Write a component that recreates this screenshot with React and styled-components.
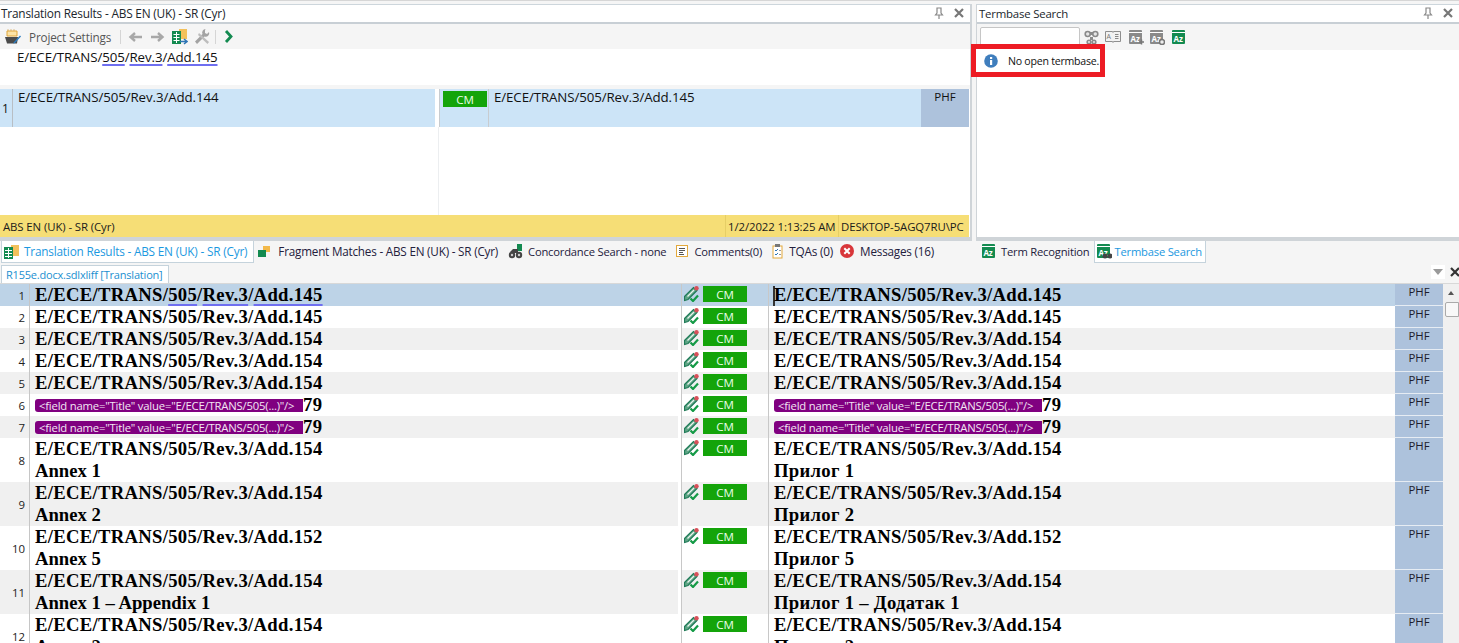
import React from "react";
import styled, { createGlobalStyle } from "styled-components";

const Global = createGlobalStyle`
  html, body { margin: 0; padding: 0; background: #f5f5f5; overflow: hidden; }
  #root { width: 1459px; height: 643px; overflow: hidden; }
  * { box-sizing: border-box; }
`;
const UI = `"Open Sans", "Liberation Sans", Arial, sans-serif`;

const Page = styled.div`
  width: 1459px; height: 643px; display: flex; flex-direction: column; overflow: hidden;
  font-family: ${UI}; font-size: 12px; color: #1b1b1b; background: #f5f5f5;
  border-top: 1px solid #d6d6d6;
`;
const TopArea = styled.div`
  height: 240px; flex: none; display: flex; padding-top: 3px; gap: 4px;
`;
const Panel = styled.section`
  width: ${p => p.$w}px; flex: none; position: relative; display: flex; flex-direction: column;
  background: #fff; border-right: ${p => p.$edge ? "2px solid #cfd4d8" : "0"};
  border-left: ${p => p.$left ? "1px solid #cfd4d8" : "0"};
  border-top: 1px solid #cdd6dc; border-bottom: 4px solid #cfd4d8;
`;
const TitleBar = styled.header`
  height: 19px; flex: none; display: flex; align-items: center; justify-content: space-between;
  padding: 0 6px 1px ${p => p.$pl || 1}px; background: #fff; border-bottom: 2px solid #c8cfd5;
  font-size: ${p => p.$fs || 11.4}px; color: #20262c; letter-spacing: -.2px;
`;
const TitleBtns = styled.div` display: flex; gap: 10px; align-items: center; color: #8a8a8a; `;
const Toolbar = styled.div`
  height: 25px; flex: none; display: flex; align-items: center; background: #f5f5f5; padding-left: 5px;
`;
const ToolLabel = styled.span` margin: 0 9px 0 8px; color: #555; font-size: 11.7px; letter-spacing: -.15px; `;
const ToolSep = styled.i` width: 1px; height: 14px; background: #d5d5d5; margin-right: ${p => p.$mr || 6}px; `;
const ToolIcon = styled.span` display: inline-flex; margin-right: ${p => p.$mr || 5}px; `;

const SourceLine = styled.div`
  height: 36px; flex: none; padding: 0 0 0 17px; line-height: 17px; font-size: 13.3px; letter-spacing: -.1px; background: #fff; color: #111;
`;
const Wavy = styled.span`
  text-decoration: underline; text-decoration-color: #6f6ff0; text-decoration-thickness: 2px;
  text-underline-offset: ${p => p.$off || 3}px; text-decoration-skip-ink: none;
`;
const Spacer = styled.div` height: 4px; flex: none; background: #f5f5f5; `;
const ResultRow = styled.div`
  height: 38px; flex: none; display: grid; grid-template-columns: 13px 422px 4px 50px 432px 48px;
  background: #fff; font-size: 13.3px; letter-spacing: -.1px; color: #111;
`;
const RNum = styled.div` background: #cce4f7; border-right: 1px solid #b8bec4; display: flex; align-items: center; padding-left: 2px; font-size: 12px; `;
const RText = styled.div` background: #cce4f7; padding: 0 5px; line-height: 17px; `;
const RStatus = styled.div` background: #cce4f7; border-left: 1px solid #c8ccd0; border-right: 1px solid #c8ccd0; padding: 2px 2px; `;
const RGap = styled.div` background: #fff; `;
const RPhf = styled.div` background: #adc2dc; text-align: center; line-height: 16px; font-size: 11.5px; letter-spacing: 0; `;
const ResultBody = styled.div` flex: 1; display: flex; background: #fff; `;
const VLine = styled.i` width: 1px; margin-left: 438px; background: #eceef0; `;
const StatusBar = styled.footer`
  height: 22px; flex: none; display: flex; align-items: center; background: #f6de76; font-size: 11.4px; letter-spacing: -.1px; white-space: nowrap; margin-right: 1px;
`;
const StatusName = styled.span` flex: 1; padding-left: 3px; `;
const StatusCell = styled.span`
  width: ${p => p.$w}px; padding-left: 2px; height: 100%; display: flex; align-items: center; border-left: 1px solid #e6ce66;
`;
const TermBody = styled.div` flex: 1; background: #fff; `;
const SearchBox = styled.div`
  width: 100px; height: 22px; margin: 1px 4px 0 0; background: #fff; border: 1px solid #c6c6c6; border-radius: 2px;
`;
const TermBar = styled(Toolbar)` padding-left: 3px; height: 26px; `;
const Notice = styled.div`
  position: absolute; left: -6px; top: 39px; width: 134px; height: 33px; border: 5px solid #ed1c24; background: #fff;
  display: flex; align-items: center; padding-left: 8px; gap: 10px; font-size: 10.6px; letter-spacing: -.25px; color: #111; white-space: nowrap;
`;

const TabRow = styled.nav` height: 22px; flex: none; display: flex; `;
const TabGroup = styled.div` width: ${p => p.$w}px; flex: none; display: flex; padding-left: ${p => p.$pl || 0}px; `;
const Tab = styled.div`
  height: 22px; display: flex; align-items: center; gap: ${p => p.$gap || 5}px; padding: 0 ${p => p.$pr || 6}px 1px ${p => p.$pil || 2}px;
  font-size: ${p => p.$fs || 11.2}px; letter-spacing: -.2px; white-space: nowrap;
  color: ${p => p.$active ? "#1b98e0" : "#23203c"};
  background: ${p => p.$active ? "#fff" : "transparent"};
  border: 1px solid ${p => p.$active ? "#c5d3dc" : "transparent"};
  border-top: 0;
`;
const DocRow = styled.div`
  height: 21px; flex: none; display: flex; align-items: flex-end; justify-content: space-between; padding-left: 1px; border-bottom: 1px solid #d8d8d8;
`;
const DocTab = styled.div`
  width: 168px; height: 18px; background: #fff; border: 1px solid #c5d3dc; border-bottom: 0; color: #1b8fd0;
  font-size: 11px; letter-spacing: -.2px; line-height: 17px; padding-left: 4px; white-space: nowrap; overflow: hidden;
`;
const DocTools = styled.div` display: flex; align-items: center; height: 18px; margin-bottom: 2px; `;
const DocArrow = styled.span`
  width: 14px; height: 14px; background: #fff; display: flex; align-items: center; justify-content: center; margin-right: 5px;
  &::after { content: ""; border: 5px solid transparent; border-top: 6px solid #9a9a9a; border-bottom: 0; }
`;
const DocX = styled.span` width: 9px; overflow: hidden; color: #333; display: inline-flex; `;

const GridWrap = styled.div` flex: 1; min-height: 0; display: flex; overflow: hidden; background: #fff; `;
const Grid = styled.div` width: 1443px; flex: none; display: flex; flex-direction: column; `;
const Row = styled.div`
  height: ${p => p.$lines * 22}px; flex: none; display: grid; grid-template-columns: 30px 648px 4px 87px 626px 48px;
  background: ${p => p.$sel ? "#bdd3e7" : p.$alt ? "#f0f0f0" : "#fff"};
  font-family: "Liberation Serif", "Times New Roman", serif; font-weight: 700; font-size: 18.67px; color: #000;
`;
const Num = styled.div`
  border-right: 1px solid #c6c6c6; display: flex; align-items: center; justify-content: flex-end; padding-right: 4px;
  font-family: ${UI}; font-weight: 400; font-size: 11.4px; color: #222;
`;
const Seg = styled.div` padding-left: 5px; line-height: 22px; white-space: nowrap; overflow: hidden; letter-spacing: .3px; `;
const LatinLine = styled.div` letter-spacing: 0; `;
const Gap = styled.div` background: ${p => p.$sel ? "#bdd3e7" : "#fff"}; `;
const StatusCol = styled.div`
  border-left: 1px solid #c8c8c8; border-right: 1px solid #c8c8c8; margin-left: -1px; padding: 2px 0 0 2px; display: flex; align-items: flex-start; gap: 3px;
`;
const Badge = styled.span`
  width: 44px; height: 16px; background: #14a40a; color: #e8ffe8; display: flex; align-items: center; justify-content: center;
  font-family: ${UI}; font-weight: 400; font-size: 11.6px; letter-spacing: 0; flex: none;
`;
const ResBadge = styled(Badge)` margin-left: 1px; `;
const Phf = styled.div`
  background: #adc2dc; border-bottom: 1px solid #e6ecf3; text-align: center; font-family: ${UI}; font-weight: 400; font-size: 11.4px; letter-spacing: -.1px; line-height: 16px; color: #1c1c2c;
`;
const Tag = styled.span`
  display: inline-block; width: 268px; height: 13px; background: #800080; color: #f3e6f3; border-radius: 3px 0 0 3px;
  font-family: ${UI}; font-weight: 400; font-size: 11.3px; line-height: 13px; letter-spacing: -.2px; padding-left: 4px; vertical-align: -1px; white-space: nowrap; overflow: hidden;
`;
const Caret = styled.span`
  display: inline-block; width: 2px; height: 20px; background: #333; margin: 0 -1px 0 -1px; vertical-align: -5px;
`;
const Scroll = styled.aside` width: 16px; flex: none; background: #f0f0f0; display: flex; flex-direction: column; align-items: flex-end; `;
const ScrollUp = styled.span`
  width: 100%; height: 18px; display: flex; align-items: center; justify-content: center;
  &::after { content: ""; border: 3.5px solid transparent; border-bottom: 4px solid #555; border-top: 0; }
`;
const Thumb = styled.span` width: 14px; height: 15px; background: #f8f8f8; border: 1px solid #aaa; border-radius: 2px 0 0 2px; `;

const S = ({ w = 16, h = 16, children }) => <svg width={w} height={h} viewBox={`0 0 ${w} ${h}`} fill="none" style={{ flex: "none", display: "block" }}>{children}</svg>;

const Pin = () => <S w={10} h={12}><path d="M3 1h4v5l1.5 2h-7L3 6zM5 8v4" stroke="#888" strokeWidth="1.2" /></S>;
const Close = ({ c = "#777" }) => <S w={10} h={10}><path d="M1 1l8 8M9 1l-8 8" stroke={c} strokeWidth="2.2" /></S>;
const ArrowIcon = ({ flip }) => <S w={15} h={12}><path d={flip ? "M1 6h11M8 2l4.5 4L8 10" : "M14 6H3M7 2L2.500 6 7 10"} stroke="#a8a8a8" strokeWidth="2.4" /></S>;
const ProjIcon = () => <S w={16} h={16}>
  <path d="M2 2h10v5H2z" fill="#fbe3a8" stroke="#e0a63a" />
  <path d="M3 1.500v-1M6 1.500v-1M9 1.500v-1" stroke="#c78c28" />
  <path d="M0 8h13l-1 6.500H2z" fill="#4b4b4b" />
  <path d="M9 13l6-6.500 1 1-6 6.500-2 .5z" fill="#2b7cc0" />
</S>;
const GridIcon = () => <S w={16} h={16}>
  <rect x="7" y="0" width="8" height="10" fill="#f3c15b" />
  <rect x="0" y="2" width="9" height="13" fill="#138a50" />
  <path d="M1.500 5.500h6M1.500 8.500h6M1.500 11.500h6M4.500 3v11" stroke="#fff" />
  <path d="M8 12.500h6M12 10l3 2.500-3 2.500" stroke="#2f75b5" strokeWidth="1.500" />
</S>;
const WrenchIcon = () => <S w={15} h={15}>
  <path d="M10.500 0a3.500 3.500 0 00-3 5L0 12.500 2 15l7.500-7.500a3.500 3.500 0 004.500-4.500l-2 2-2-1V1.500z" fill="#a3a3a3" />
  <path d="M4 4l10 9-1.500 2L3 6z" fill="#bdbdbd" />
</S>;
const Chevron = () => <S w={10} h={13}><path d="M2 1l5 5.500L2 12" stroke="#138a50" strokeWidth="2.800" /></S>;
const Binoc = () => <S w={15} h={16}>
  <circle cx="3.700" cy="5" r="3.300" fill="#8a8a8a" /><circle cx="11.300" cy="5" r="3.300" fill="#8a8a8a" />
  <rect x="5" y="3" width="5" height="3" fill="#8a8a8a" />
  <circle cx="3.700" cy="5" r="1.700" fill="#e6e6e6" /><circle cx="11.300" cy="5" r="1.700" fill="#e6e6e6" />
  <circle cx="5" cy="13" r="2.600" fill="#8a8a8a" /><circle cx="10" cy="13" r="2.600" fill="#8a8a8a" />
  <circle cx="5" cy="13" r="1" fill="#e6e6e6" /><circle cx="10" cy="13" r="1" fill="#e6e6e6" />
  <rect x="6" y="8" width="3" height="3" fill="#8a8a8a" />
</S>;
const BookIcon = () => <S w={16} h={14}>
  <path d="M.5 1.500h7L8 2.500l.5-1h7v10h-7L8 12.500l-.5-1h-7z" fill="#f2f2f2" stroke="#8e8e8e" />
  <text x="1.600" y="9" fontSize="7" fill="#777" fontFamily={UI}>A</text>
  <path d="M10 4.500h3.500M10 6.500h3.500M10 8.500h3.500" stroke="#888" />
</S>;
const AzBox = ({ c = "#138a50", extra }) => <S w={16} h={16}>
  <rect x="1" y="1" width="13" height="14" rx="1" fill={c} />
  <path d="M1 3.500h13" stroke="#fff" />
  <text x="2.500" y="12.500" fontSize="8" fontWeight="700" fill="#fff" fontFamily={UI}>Az</text>
  {extra}
</S>;
const Info = () => <S w={14} h={14}>
  <circle cx="7" cy="7" r="6.800" fill="#3f7ebd" />
  <rect x="6" y="6" width="2.200" height="5" fill="#fff" /><rect x="6" y="3" width="2.200" height="2" fill="#fff" />
</S>;
const TrTab = () => <S w={17} h={15}>
  <rect x="8" y="1" width="8" height="11" fill="#f3c15b" />
  <rect x="1" y="3" width="9" height="12" fill="#138a50" />
  <path d="M2 6.500h7M2 9.500h7M2 12.500h7M5.500 4v10" stroke="#fff" />
</S>;
const FragTab = () => <S w={13} h={13}>
  <rect x="5" y="1" width="7" height="6" fill="#f3b94a" />
  <rect x="0" y="5" width="8" height="7" fill="#138a50" />
</S>;
const ConcTab = () => <S w={15} h={15}>
  <rect x="9" y="0" width="5" height="7" fill="#138a50" />
  <circle cx="4" cy="11" r="3.200" fill="#444" /><circle cx="11" cy="11" r="3.200" fill="#444" />
  <path d="M2 8l3-3h5v4H5z" fill="#444" />
  <circle cx="4" cy="11" r="1.200" fill="#ccc" /><circle cx="11" cy="11" r="1.200" fill="#ccc" />
</S>;
const NoteTab = () => <S w={13} h={13}>
  <rect x=".5" y=".5" width="11" height="11" fill="#fff" stroke="#e3a93c" />
  <path d="M3 3.500h6M3 5.500h6M3 7.500h4M3 9.500h5" stroke="#555" />
</S>;
const TqaTab = () => <S w={11} h={15}>
  <rect x="1" y="2" width="9" height="12" fill="#fff" stroke="#e3a93c" />
  <rect x="3" y="0" width="5" height="3" fill="#777" />
  <path d="M3 6l1 1 2-2M3 10l1 1 2-2" stroke="#2f75b5" /><path d="M7 6.500h2M7 10.500h2" stroke="#999" />
</S>;
const MsgTab = () => <S w={14} h={14}>
  <circle cx="7" cy="7" r="7" fill="#d8363a" />
  <path d="M4.300 4.300l5.400 5.400M9.700 4.300L4.300 9.700" stroke="#fff" strokeWidth="2" />
</S>;
const Pencil = () => <S w={16} h={16}>
  <path d="M.5 10.500L9.500 1.500l3.500 3L4 13.500l-3.500 1z" fill="#5fa585" stroke="#1f7a57" strokeWidth="1.200" />
  <path d="M3.500 10.500L10 4" stroke="#eaf4ee" strokeWidth="1.200" />
  <circle cx="12.500" cy="2.300" r="2.200" fill="#d8505a" />
  <path d="M6.500 12.500l2.500 2.500 5-5.500" stroke="#149a46" strokeWidth="2.200" />
</S>;

const B = "E/ECE/TRANS/505/Rev.3/Add.";
const F = `<field name="Title" value="E/ECE/TRANS/505(...)"/>`;
const rows = [
  { n: 1, l: 1, a: [B + "145"], t: [B + "145"], sel: true },
  { n: 2, l: 1, a: [B + "145"], t: [B + "145"] },
  { n: 3, l: 1, a: [B + "154"], t: [B + "154"] },
  { n: 4, l: 1, a: [B + "154"], t: [B + "154"] },
  { n: 5, l: 1, a: [B + "154"], t: [B + "154"] },
  { n: 6, l: 1, tag: true },
  { n: 7, l: 1, tag: true },
  { n: 8, l: 2, a: [B + "154", "Annex 1"], t: [B + "154", "Прилог 1"] },
  { n: 9, l: 2, a: [B + "154", "Annex 2"], t: [B + "154", "Прилог 2"] },
  { n: 10, l: 2, a: [B + "152", "Annex 5"], t: [B + "152", "Прилог 5"] },
  { n: 11, l: 2, a: [B + "154", "Annex 1 – Appendix 1"], t: [B + "154", "Прилог 1 – Додатак 1"] },
  { n: 12, l: 2, a: [B + "154", "Annex 2"], t: [B + "154", "Прилог 2"] },
];

const Marked = ({ off }) => <>E/ECE/TRANS/<Wavy $off={off}>505</Wavy>/<Wavy $off={off}>Rev.3</Wavy>/<Wavy $off={off}>Add.145</Wavy></>;
const SegLines = ({ lines }) => lines.map((l, i) => (l.startsWith("Annex") ? <LatinLine key={i}>{l}</LatinLine> : <div key={i}>{l}</div>));
const TagLine = () => <div><Tag>{F}</Tag>79</div>;

export default function App() {
  return (
    <Page>
      <Global />
      <TopArea>
        <Panel $w={972} $edge>
          <TitleBar $fs={11.85}>
            <span>Translation Results - ABS EN (UK) - SR (Cyr)</span>
            <TitleBtns><Pin /><Close /></TitleBtns>
          </TitleBar>
          <Toolbar>
            <ProjIcon />
            <ToolLabel>Project Settings</ToolLabel>
            <ToolSep $mr={7} />
            <ToolIcon $mr={7}><ArrowIcon /></ToolIcon>
            <ToolIcon $mr={7}><ArrowIcon flip /></ToolIcon>
            <ToolIcon $mr={7}><GridIcon /></ToolIcon>
            <ToolIcon $mr={5}><WrenchIcon /></ToolIcon>
            <ToolSep $mr={8} />
            <ToolIcon><Chevron /></ToolIcon>
          </Toolbar>
          <SourceLine><Marked off={2} /></SourceLine>
          <Spacer />
          <ResultRow>
            <RNum>1</RNum>
            <RText>E/ECE/TRANS/505/Rev.3/Add.144</RText>
            <RGap />
            <RStatus><ResBadge>CM</ResBadge></RStatus>
            <RText>E/ECE/TRANS/505/Rev.3/Add.145</RText>
            <RPhf>PHF</RPhf>
          </ResultRow>
          <ResultBody><VLine /></ResultBody>
          <StatusBar>
            <StatusName>ABS EN (UK) - SR (Cyr)</StatusName>
            <StatusCell $w={113}>1/2/2022 1:13:25 AM</StatusCell>
            <StatusCell $w={131}>DESKTOP-5AGQ7RU\PC</StatusCell>
          </StatusBar>
        </Panel>
        <Panel $w={483} $left>
          <TitleBar $pl={2}>
            <span>Termbase Search</span>
            <TitleBtns><Pin /><Close /></TitleBtns>
          </TitleBar>
          <TermBar>
            <SearchBox />
            <ToolIcon $mr={6}><Binoc /></ToolIcon>
            <ToolIcon $mr={7}><BookIcon /></ToolIcon>
            <ToolIcon $mr={5}><AzBox c="#8a8a8a" extra={<path d="M11 13h5M13.500 10.500v5" stroke="#777" strokeWidth="1.500" />} /></ToolIcon>
            <ToolIcon $mr={6}><AzBox c="#8a8a8a" extra={<circle cx="13" cy="13" r="2.500" fill="#eee" stroke="#777" strokeWidth="1.500" />} /></ToolIcon>
            <ToolIcon><AzBox /></ToolIcon>
          </TermBar>
          <TermBody />
          <Notice><Info /><span>No open termbase.</span></Notice>
        </Panel>
      </TopArea>
      <TabRow>
        <TabGroup $w={979} $pl={1}>
          <Tab $active $fs={11.8} $gap={4} $pr={6} $pil={1}><TrTab />Translation Results - ABS EN (UK) - SR (Cyr)</Tab>
          <Tab $fs={11.7} $gap={7} $pil={3}><FragTab />Fragment Matches - ABS EN (UK) - SR (Cyr)</Tab>
          <Tab $gap={5} $pil={2}><ConcTab />Concordance Search - none</Tab>
          <Tab $gap={5} $pil={2}><NoteTab />Comments(0)</Tab>
          <Tab $fs={11.8} $gap={6} $pil={2} $pr={3}><TqaTab />TQAs (0)</Tab>
          <Tab $fs={11.7} $gap={6} $pil={2}><MsgTab />Messages (16)</Tab>
        </TabGroup>
        <TabGroup $w={480}>
          <Tab $gap={4} $pr={3} $pil={1}><AzBox />Term Recognition</Tab>
          <Tab $active $gap={3} $pr={3} $pil={1}><AzBox extra={<g><circle cx="9" cy="13" r="2.500" fill="#444" /><circle cx="14" cy="13" r="2.500" fill="#444" /></g>} />Termbase Search</Tab>
        </TabGroup>
      </TabRow>
      <DocRow>
        <DocTab>R155e.docx.sdlxliff [Translation]</DocTab>
        <DocTools><DocArrow /><DocX><Close c="#333" /></DocX></DocTools>
      </DocRow>
      <GridWrap>
        <Grid>
          {rows.map((r, i) => (
            <Row key={r.n} $lines={r.l} $sel={r.sel} $alt={i % 2 === 0 && i > 0}>
              <Num>{r.n}</Num>
              <Seg>{r.tag ? <TagLine /> : r.sel ? <Marked off={3} /> : <SegLines lines={r.a} />}</Seg>
              <Gap $sel={r.sel} />
              <StatusCol><Pencil /><Badge>CM</Badge></StatusCol>
              <Seg>{r.tag ? <TagLine /> : r.sel ? <><Caret />{r.t[0]}</> : <SegLines lines={r.t} />}</Seg>
              <Phf>PHF</Phf>
            </Row>
          ))}
        </Grid>
        <Scroll><ScrollUp /><Thumb /></Scroll>
      </GridWrap>
    </Page>
  );
}
